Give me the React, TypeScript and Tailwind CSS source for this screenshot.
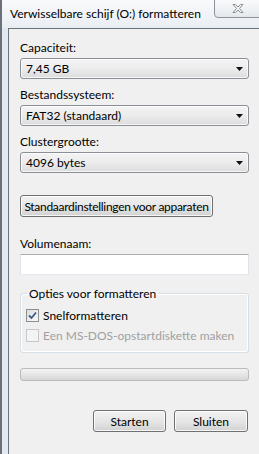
import type { ReactNode } from 'react';

const font = "font-[family-name:Lato,'Noto_Sans',sans-serif]";

function Combo({ value }: { value: string }) {
  return (
    <div className="mt-[3px] h-[21px] flex items-center justify-between rounded-[3px] border border-[#8b9097] bg-gradient-to-b from-[#f4f4f4] via-[#ececec] to-[#dcdcdc] pl-[5px] pr-[5px] shadow-[inset_0_0_0_1px_rgba(255,255,255,0.7)]">
      <span className="text-[12px] leading-[15px] text-black">{value}</span>
      <svg width="7" height="4" viewBox="0 0 7 4">
        <path d="M0 0 H7 L3.5 4 Z" fill="#111" />
      </svg>
    </div>
  );
}

function Label({ children, className = '' }: { children: ReactNode; className?: string }) {
  return <div className={`text-[12px] leading-[15px] text-black ${className}`}>{children}</div>;
}

function Button({ children, className = '' }: { children: ReactNode; className?: string }) {
  return (
    <div
      className={`h-[22px] flex items-center justify-center whitespace-nowrap rounded-[3px] border border-[#707070] bg-gradient-to-b from-[#f2f2f2] via-[#e6e6e6] to-[#d2d2d2] shadow-[inset_0_0_0_1px_rgba(255,255,255,0.8)] text-[12px] leading-[15px] text-black ${className}`}
    >
      {children}
    </div>
  );
}

function CheckBox({ checked, disabled }: { checked?: boolean; disabled?: boolean }) {
  return (
    <div
      className={`w-[13px] h-[13px] flex items-center justify-center border ${
        disabled ? 'border-[#c8c8c8] bg-[#f4f4f4]' : 'border-[#8e8f8f] bg-gradient-to-br from-[#dcdcdc] to-[#fbfbfb]'
      }`}
    >
      {checked && (
        <svg width="9" height="9" viewBox="0 0 9 9">
          <path d="M1 4.5 L3.5 7 L8 1.5" fill="none" stroke="#3d5a8a" strokeWidth="1.8" />
        </svg>
      )}
    </div>
  );
}

export default function App() {
  return (
    <div className={`w-[259px] h-[454px] overflow-hidden flex bg-[#e3e9f0] ${font}`}>
      <div className="w-[2px] bg-[#6b7079]" />
      <div className="flex-1 flex flex-col">
        {/* Title bar */}
        <div className="relative h-[28px] bg-gradient-to-b from-[#f9fafc] to-[#e9eef3]">
          <span className="absolute left-[8px] top-[6px] text-[12px] leading-[15px] text-black whitespace-nowrap">
            Verwisselbare schijf (O:) formatteren
          </span>
          <div className="absolute left-[212px] top-[-1px] w-[52px] h-[19px] rounded-b-[4px] border border-[#8d939b] bg-gradient-to-b from-[#fbfbfc] to-[#e4e8ec] flex items-center pl-[17px]">
            <svg width="12" height="9" viewBox="0 0 12 9">
              <path
                d="M1 0.5 H3.5 L6 3 L8.5 0.5 H11 L7.5 4.5 L11 8.5 H8.5 L6 6 L3.5 8.5 H1 L4.5 4.5 Z"
                fill="#f4f5f6"
                stroke="#8a8f96"
                strokeWidth="1"
              />
            </svg>
          </div>
        </div>

        <div className="flex-1 flex">
          <div className="w-[6px]" />
          {/* Client area */}
          <div className="flex-1 flex flex-col border-l border-t border-[#6e747c] bg-[#f0f0f0] pl-[11px] pr-[10px]">
            <Label className="mt-[11px]">Capaciteit:</Label>
            <Combo value="7,45 GB" />
            <Label className="mt-[8px]">Bestandssysteem:</Label>
            <Combo value="FAT32 (standaard)" />
            <Label className="mt-[8px]">Clustergrootte:</Label>
            <Combo value="4096 bytes" />

            <Button className="mt-[22px] w-[193px] tracking-[-0.3px]">Standaardinstellingen voor apparaten</Button>

            <Label className="mt-[19px]">Volumenaam:</Label>
            <div className="mt-[3px] h-[21px] border border-[#abadb3] border-l-[#e2e3ea] border-r-[#e2e3ea] border-b-[#e3e9ef] bg-white" />

            <fieldset className="mt-[11px] rounded-[3px] border border-[#d5dfe5] shadow-[inset_0_0_0_1px_#ffffff] pl-[5px] pb-[9px]">
              <legend className="ml-[1px] px-[2px] text-[12px] leading-[15px] text-black">
                Opties voor formatteren
              </legend>
              <div className="mt-[7px] flex items-center gap-[4px]">
                <CheckBox checked />
                <span className="text-[12px] leading-[15px] text-black">Snelformatteren</span>
              </div>
              <div className="mt-[5px] flex items-center gap-[4px]">
                <CheckBox disabled />
                <span className="text-[12px] leading-[15px] text-[#a0a0a0]">Een MS-DOS-opstartdiskette maken</span>
              </div>
            </fieldset>

            <div className="mt-[15px] h-[13px] rounded-[3px] border border-[#bcbcbc] bg-gradient-to-b from-[#f3f3f3] via-[#e6e6e6] to-[#d6d6d6]" />

            <div className="mt-[29px] flex justify-end gap-[8px] pr-[1px]">
              <Button className="w-[73px]">Starten</Button>
              <Button className="w-[74px]">Sluiten</Button>
            </div>
          </div>
        </div>
      </div>
    </div>
  );
}
